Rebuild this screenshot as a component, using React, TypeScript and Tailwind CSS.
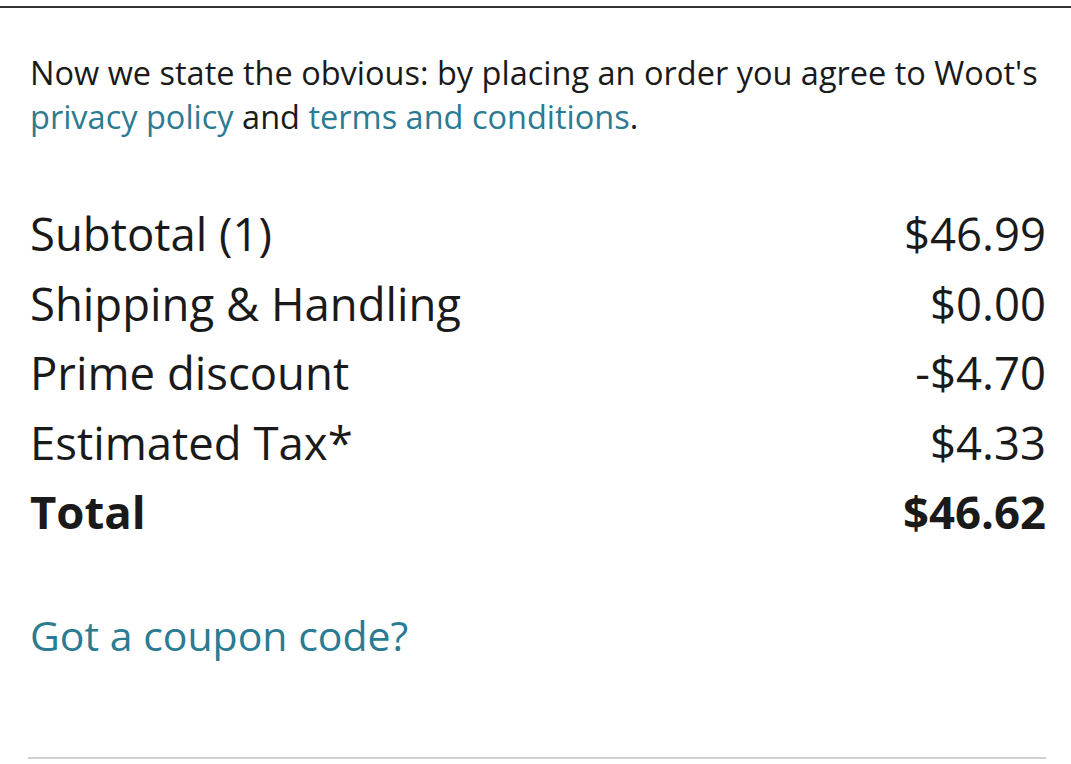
import type { FC } from 'react';

const rows = [
  { label: 'Subtotal (1)', value: '$46.99' },
  { label: 'Shipping & Handling', value: '$0.00' },
  { label: 'Prime discount', value: '-$4.70' },
  { label: 'Estimated Tax*', value: '$4.33' },
];

const App: FC = () => {
  return (
    <div
      className="h-[764px] overflow-hidden bg-white text-[#1a1a1a]"
      style={{ fontFamily: '"Open Sans", sans-serif' }}
    >
      <div className="border-t-2 border-[#333] mt-[6px]" />
      <div className="pl-[30px] pr-[25px]">
        <p className="mt-[43px] text-[32.5px] leading-[44px]">
          Now we state the obvious: by placing an order you agree to Woot's{' '}
          <a href="#" className="text-[#2b7b92]">privacy policy</a> and{' '}
          <a href="#" className="text-[#2b7b92]">terms and conditions</a>.
        </p>

        <div className="mt-[60px] flex flex-col">
          {rows.map((r) => (
            <div key={r.label} className="flex justify-between text-[45.5px] leading-[69.5px]">
              <span>{r.label}</span>
              <span>{r.value}</span>
            </div>
          ))}
          <div className="flex justify-between text-[45.5px] leading-[69.5px] font-bold">
            <span>Total</span>
            <span>$46.62</span>
          </div>
        </div>

        <a href="#" className="block mt-[63px] text-[41px] leading-[50px] text-[#2b7b92]">
          Got a coupon code?
        </a>

        <div className="mt-[97px] ml-[-2px] border-t-2 border-[#d0d0d0]" />
      </div>
    </div>
  );
};

export default App;
